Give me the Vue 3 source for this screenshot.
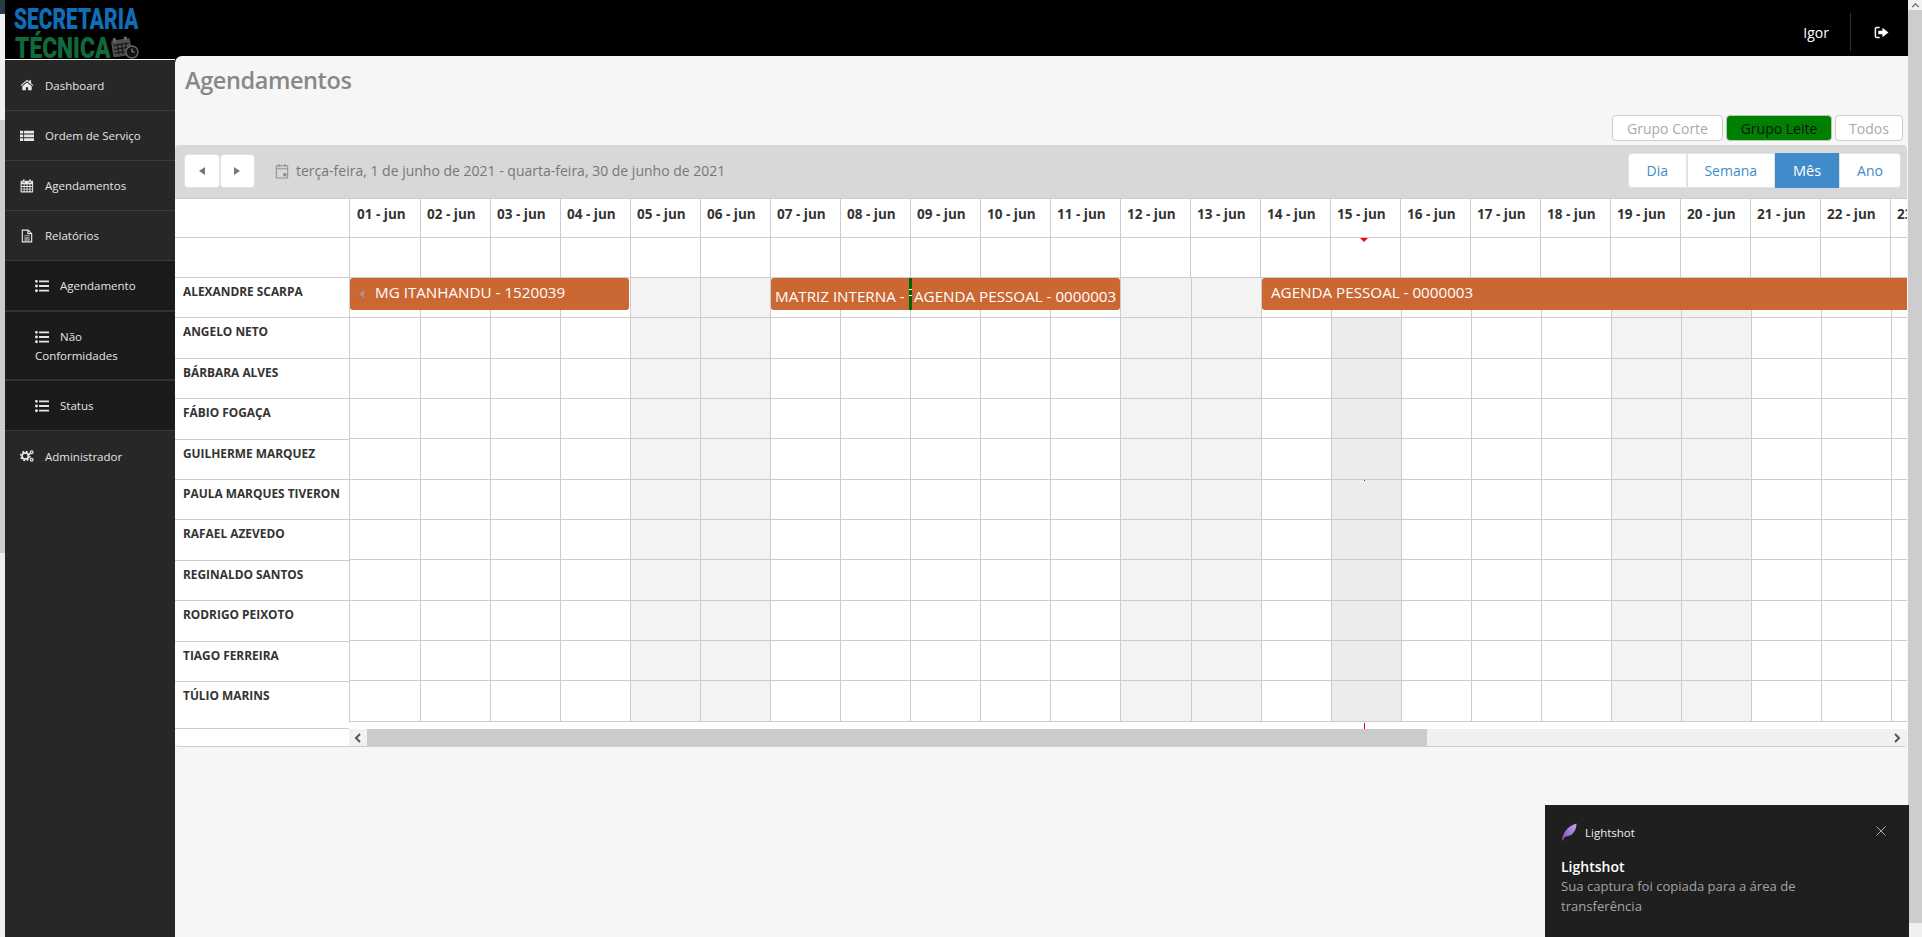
<script setup>
const days = Array.from({ length: 23 }, (_, i) => i + 1)
const label = d => String(d).padStart(2, '0') + ' - jun'
const isWeekend = d => d % 7 === 5 || d % 7 === 6
const people = ['ALEXANDRE SCARPA', 'ANGELO NETO', 'BÁRBARA ALVES', 'FÁBIO FOGAÇA', 'GUILHERME MARQUEZ', 'PAULA MARQUES TIVERON', 'RAFAEL AZEVEDO', 'REGINALDO SANTOS', 'RODRIGO PEIXOTO', 'TIAGO FERREIRA', 'TÚLIO MARINS']
</script>

<template>
  <div class="screen">
    <div class="strip">
      <div class="strip-a"></div>
      <div class="strip-b"></div>
      <div class="strip-c"></div>
      <div class="strip-d"></div>
    </div>

    <div class="app">
      <header class="topbar">
        <div class="logo">
          <div class="logo-line logo-blue"><span>SECRETARIA</span></div>
          <div class="logo-line logo-green"><span>TÉCNICA</span></div>
          <svg class="logo-icon" viewBox="0 0 28 24">
            <g transform="rotate(-8 12 12)">
              <rect x="1" y="4" width="19" height="17" rx="1.5" fill="#4d4d4d" />
              <rect x="3" y="2" width="3" height="4" fill="#666" />
              <rect x="14" y="2" width="3" height="4" fill="#666" />
              <path d="M3 9h15M3 13h15M3 17h15M7 8v11M11 8v11M15 8v11" stroke="#111" stroke-width="1" fill="none" />
            </g>
            <circle cx="21" cy="17" r="6" fill="#111" stroke="#666" stroke-width="1.4" />
            <path d="M21 13.5V17h3" stroke="#888" stroke-width="1.2" fill="none" />
          </svg>
        </div>
        <div class="user">Igor</div>
        <div class="logout">
          <svg viewBox="0 0 16 14" class="logout-icon">
            <path d="M6 1.5H3A1.6 1.6 0 0 0 1.4 3v8A1.6 1.6 0 0 0 3 12.5h3" fill="none" stroke="#fff" stroke-width="1.6" />
            <path d="M4.5 5H9V1.8L15.5 7 9 12.2V9H4.5z" fill="#fff" />
          </svg>
        </div>
      </header>

      <div class="body">
        <nav class="sidebar">
          <a class="nav-item nav-first">
            <svg class="ico" viewBox="0 0 24 24"><path d="M12 3 1 12.4l1.2 1.4L12 5.6l9.8 8.2 1.2-1.4-4-3.4V4h-3v2.4z" /><path d="M12 7.6 4 14.2V21h6v-5h4v5h6v-6.8z" /></svg>
            Dashboard
          </a>
          <a class="nav-item">
            <svg class="ico" viewBox="0 0 24 24"><path d="M0 3h5.5v4.6H0zM7 3h17v4.6H7zM0 9.4h5.5V14H0zM7 9.4h17V14H7zM0 15.8h5.5v4.6H0zM7 15.8h17v4.6H7z" /></svg>
            Ordem de Serviço
          </a>
          <a class="nav-item">
            <svg class="ico" viewBox="0 0 24 24"><path d="M5 1h3v4H5zM15.500 1h3v4h-3z" /><path fill-rule="evenodd" d="M2 3h2.500v3h4V3h6.500v3h4V3H21.500A1 1 0 0 1 22.500 4v18a1 1 0 0 1-1 1H2a1 1 0 0 1-1-1V4a1 1 0 0 1 1-1zM2.800 9v3h3.600V9zm5 0v3h3.400V9zm5 0v3h3.400V9zm5 0v3h3V9zM2.800 13.500v3h3.600v-3zm5 0v3h3.400v-3zm5 0v3h3.400v-3zm5 0v3h3v-3zM2.800 18v3h3.600v-3zm5 0v3h3.400v-3zm5 0v3h3.400v-3zm5 0v3h3v-3z" /></svg>
            Agendamentos
          </a>
          <a class="nav-item">
            <svg class="ico" viewBox="0 0 24 24"><path fill-rule="evenodd" d="M3 1h11.500L21 7.500V23H3zM5 3v18h14V9h-6.500V3zm9.500.800V7h3.200zM7.500 11h9v1.600h-9zm0 3.500h9v1.600h-9zm0 3.500h9v1.600h-9z" /></svg>
            Relatórios
          </a>
          <div class="submenu">
            <a class="sub-item">
              <svg class="ico" viewBox="0 0 24 24"><path d="M0 4a2.500 2.500 0 1 1 5 0 2.500 2.500 0 0 1-5 0zM0 12a2.500 2.500 0 1 1 5 0 2.500 2.500 0 0 1-5 0zM0 20a2.500 2.500 0 1 1 5 0 2.500 2.500 0 0 1-5 0zM7 2.500h17v3.200H7zM7 10.400h17v3.200H7zM7 18.300h17v3.200H7z" /></svg>
              Agendamento
            </a>
            <a class="sub-item sub-wrap">
              <span class="sub-first">
                <svg class="ico" viewBox="0 0 24 24"><path d="M0 4a2.500 2.500 0 1 1 5 0 2.500 2.500 0 0 1-5 0zM0 12a2.500 2.500 0 1 1 5 0 2.500 2.500 0 0 1-5 0zM0 20a2.500 2.500 0 1 1 5 0 2.500 2.500 0 0 1-5 0zM7 2.500h17v3.200H7zM7 10.400h17v3.200H7zM7 18.300h17v3.200H7z" /></svg>
                Não
              </span>
              <span>Conformidades</span>
            </a>
            <a class="sub-item">
              <svg class="ico" viewBox="0 0 24 24"><path d="M0 4a2.500 2.500 0 1 1 5 0 2.500 2.500 0 0 1-5 0zM0 12a2.500 2.500 0 1 1 5 0 2.500 2.500 0 0 1-5 0zM0 20a2.500 2.500 0 1 1 5 0 2.500 2.500 0 0 1-5 0zM7 2.500h17v3.200H7zM7 10.400h17v3.200H7zM7 18.300h17v3.200H7z" /></svg>
              Status
            </a>
          </div>
          <a class="nav-item nav-plain">
            <svg class="ico" viewBox="0 0 24 24">
              <circle cx="9" cy="12" r="5.500" fill="none" stroke="#e8e8e8" stroke-width="3" />
              <circle cx="9" cy="12" r="8" fill="none" stroke="#e8e8e8" stroke-width="2.400" stroke-dasharray="3.200 3.080" />
              <circle cx="20" cy="5.500" r="2.400" fill="none" stroke="#e8e8e8" stroke-width="2" />
              <circle cx="20" cy="18.500" r="2.400" fill="none" stroke="#e8e8e8" stroke-width="2" />
            </svg>
            Administrador
          </a>
        </nav>

        <main class="content">
          <h1 class="title">Agendamentos</h1>
          <div class="groups">
            <button class="group">Grupo Corte</button>
            <button class="group group-active">Grupo Leite</button>
            <button class="group group-all">Todos</button>
          </div>

          <section class="calendar">
            <div class="toolbar">
              <div class="toolbar-left">
                <div class="btn-pair">
                  <button class="arrow-btn"><span class="tri tri-left"></span></button>
                  <button class="arrow-btn"><span class="tri tri-right"></span></button>
                </div>
                <svg class="date-ico" viewBox="0 0 16 18">
                  <path d="M1.500 3h13v14h-13zM1.500 6.500h13M4.500 1v3.500M11.500 1v3.500" fill="none" stroke="#8a8a8a" stroke-width="1.100" />
                  <rect x="9.500" y="11.500" width="3.500" height="3.500" fill="#8a8a8a" />
                </svg>
                <span class="date-text">terça-feira, 1 de junho de 2021 - quarta-feira, 30 de junho de 2021</span>
              </div>
              <div class="views">
                <button class="view view-dia">Dia</button>
                <button class="view view-semana">Semana</button>
                <button class="view view-mes">Mês</button>
                <button class="view view-ano">Ano</button>
              </div>
            </div>

            <div class="cal-body">
              <div class="names">
                <div class="names-head"></div>
                <div class="names-blank"></div>
                <div v-for="p in people" :key="p" class="name">{{ p }}</div>
              </div>

              <div class="timeline">
                <div class="head-row">
                  <div v-for="d in days" :key="d" class="head-cell">{{ label(d) }}</div>
                </div>
                <div class="blank-row">
                  <div v-for="d in days" :key="d" class="blank-cell"></div>
                </div>
                <div v-for="(p, r) in people" :key="p" class="grid-row">
                  <div
                    v-for="d in days"
                    :key="d"
                    class="grid-cell"
                    :class="{ weekend: isWeekend(d), today: d === 15 && r > 0 }"
                  ></div>
                  <template v-if="r === 0">
                    <div class="event event-a"><span class="tri-ev"></span>MG ITANHANDU - 1520039</div>
                    <div class="event event-b">MATRIZ INTERNA - 1520040</div>
                    <div class="event-sep"></div>
                    <div class="event event-c">AGENDA PESSOAL - 0000003</div>
                    <div class="event event-d">AGENDA PESSOAL - 0000003</div>
                  </template>
                </div>
                <div class="hscroll">
                  <div class="hs-btn"><svg viewBox="0 0 10 10" class="chev"><path d="M7 1 3 5l4 4" /></svg></div>
                  <div class="hs-thumb"></div>
                  <div class="hs-track"></div>
                  <div class="hs-btn hs-end"><svg viewBox="0 0 10 10" class="chev"><path d="m3 1 4 4-4 4" /></svg></div>
                </div>
                <span class="mark-top"></span>
                <span class="mark-tick"></span>
                <span class="mark-foot"></span>
              </div>
            </div>
          </section>
        </main>
      </div>
    </div>

    <div class="vscroll">
      <div class="vs-cap"><svg viewBox="0 0 10 6" class="vs-chev"><path d="m1 5 4-4 4 4" /></svg></div>
      <div class="vs-bar"></div>
      <div class="vs-end"></div>
    </div>

    <aside class="toast">
      <div class="toast-head">
        <svg class="feather" viewBox="0 0 16 18">
          <defs>
            <linearGradient id="fth" x1="0" y1="1" x2="1" y2="0">
              <stop offset="0" stop-color="#7d4fc0" />
              <stop offset="1" stop-color="#c9a3ee" />
            </linearGradient>
          </defs>
          <path d="M1 17.500C1.500 11 6 3 15.500 .5 15.500 7 12 13 5 13.500 3.500 14 2.500 15.500 2 17.500z" fill="url(#fth)" />
        </svg>
        <span class="toast-app">Lightshot</span>
        <svg class="toast-x" viewBox="0 0 10 10"><path d="m.5 .5 9 9m0-9-9 9" /></svg>
      </div>
      <div class="toast-title">Lightshot</div>
      <div class="toast-msg">Sua captura foi copiada para a área de transferência</div>
    </aside>
  </div>
</template>

<style>
html, body { margin: 0; padding: 0; background: #f6f6f6; overflow: hidden; }
</style>

<style scoped>
* { box-sizing: border-box; }
.screen {
  position: relative;
  display: flex;
  width: 1922px;
  height: 937px;
  overflow: hidden;
  font-family: "Open Sans", "Liberation Sans", sans-serif;
  color: #333;
}
.strip { width: 5px; display: flex; flex-direction: column; flex: none; }
.strip-a { height: 14px; background: #2c3a4a; }
.strip-b { height: 106px; background: #f0f0f0; }
.strip-c { height: 433px; background: #cdcdcd; }
.strip-d { flex: 1; background: #eeeeee; }

.app { width: 1903px; flex: none; display: flex; flex-direction: column; background: #000; }

.topbar { height: 56px; flex: none; background: #000; display: flex; align-items: flex-start; position: relative; }
.logo { position: relative; width: 140px; height: 59px; font-family: Roboto, "Liberation Sans", sans-serif; font-weight: 900; z-index: 2; }
.logo-line { position: absolute; white-space: nowrap; line-height: 1; }
.logo-line span { display: inline-block; transform-origin: left center; }
.logo-blue { left: 9px; top: 5px; font-size: 29.500px; color: #0e6fb8; }
.logo-blue span { transform: scaleX(.707); }
.logo-green { left: 10px; top: 33px; font-size: 30px; color: #0f6a3c; }
.logo-green span { transform: scaleX(.76); }
.logo-icon { position: absolute; left: 105px; top: 35px; width: 30px; height: 24px; }
.user { margin-left: auto; color: #fff; font-size: 14px; margin-right: 21px; margin-top: 23px; }
.logout { width: 58px; height: 38px; margin-top: 13px; border-left: 1px solid #2b3440; display: flex; align-items: center; padding-left: 23px; }
.logout-icon { width: 15px; height: 13px; }

.body { flex: 1; display: flex; min-height: 0; }
.sidebar { width: 170px; flex: none; margin-top: 3px; border-top: 1px solid #fff; background: #272727; color: #e4e4e4; font-size: 11.500px; display: flex; flex-direction: column; }
.nav-item { height: 50px; flex: none; display: flex; align-items: center; padding-left: 15px; border-bottom: 1px solid #3a3a3a; }
.nav-first { height: 51px; }
.nav-plain { border-bottom: 0; }
.ico { width: 14px; height: 14px; fill: #e8e8e8; margin-right: 11px; flex: none; }
.submenu { background: #1b1b1b; }
.sub-item { height: 51px; display: flex; align-items: center; padding-left: 30px; border-bottom: 2px solid #333; }
.sub-item .ico { margin-right: 11px; }
.sub-item:last-child { border-bottom: 1px solid #3a3a3a; height: 50px; }
.sub-wrap { height: 69px; flex-direction: column; align-items: flex-start; justify-content: center; gap: 3px; }
.sub-first { display: flex; align-items: center; height: 16px; }
.sub-first .ico { margin-right: 11px; }

.content { flex: 1; min-width: 0; background: #f6f6f6; border-top-left-radius: 7px; display: flex; flex-direction: column; }
.title { margin: 0; height: 59px; padding: 6px 0 0 10px; font-size: 23.500px; line-height: 36px; font-weight: 600; letter-spacing: -.4px; color: #888; }
.groups { display: flex; justify-content: flex-end; gap: 3px; padding-right: 5px; height: 26px; }
.group { height: 26px; padding: 0; width: 111px; background: #fff; border: 1px solid #ccc; border-radius: 4px; color: #aaa; font: 14px "Open Sans", sans-serif; }
.group-active { width: 106px; background: #008000; color: #111; border-color: #b5c8b5; }
.group-all { width: 68px; }

.calendar { margin-top: 4px; width: 1732px; height: 602px; background: #fff; border-bottom: 1px solid #ccc; border-radius: 4px; overflow: hidden; display: flex; flex-direction: column; }
.toolbar { height: 54px; flex: none; background: #d8d8d8; border-bottom: 1px solid #ccc; display: flex; align-items: center; justify-content: space-between; padding: 0 6px 2px 9px; }
.toolbar-left { display: flex; align-items: center; }
.btn-pair { display: flex; }
.arrow-btn { width: 35.500px; height: 34px; padding: 0; background: #fff; border: 1px solid #e3e3e3; border-radius: 4px; display: flex; align-items: center; justify-content: center; }
.tri { width: 0; height: 0; border-top: 4.500px solid transparent; border-bottom: 4.500px solid transparent; }
.tri-left { border-right: 6px solid #777; }
.tri-right { border-left: 6px solid #777; }
.date-ico { width: 14px; height: 16px; margin-left: 20px; }
.date-text { margin-left: 7px; font-size: 14px; color: #777; }
.views { display: flex; }
.view { height: 35px; padding: 0; background: #fff; border: 1px solid #e3e3e3; border-radius: 4px; color: #428bca; font: 14px "Open Sans", sans-serif; }
.view-dia { width: 58.500px; border-radius: 4px 0 0 4px; }
.view-semana { width: 88.500px; border-radius: 0; }
.view-mes { width: 64px; background: #428bca; border-color: #428bca; color: #fff; border-radius: 0; font-size: 14.500px; }
.view-ano { width: 62px; border-radius: 0 4px 4px 0; }

.cal-body { display: flex; flex: 1; min-height: 0; }
.names { width: 174px; flex: none; }
.names-head { height: 39px; border-bottom: 1px solid #ccc; }
.names-blank { height: 40px; border-bottom: 1px solid #ccc; }
.name { height: 40.420px; padding: 4px 0 0 8px; font-size: 11.900px; line-height: 18px; font-weight: 700; color: #333; border-bottom: 1px solid #ccc; white-space: nowrap; }
.name:first-of-type { padding-top: 3px; }
.name:last-child { height: 47px; }

.timeline { position: relative; flex: 1; min-width: 0; overflow: hidden; display: flex; flex-direction: column; }
.head-row, .blank-row, .grid-row { display: flex; flex: none; }
.head-row { height: 39px; }
.blank-row { height: 40px; }
.grid-row { height: 40.330px; position: relative; }
.head-cell, .blank-cell, .grid-cell { flex: none; width: 70px; border-left: 1px solid #ccc; border-bottom: 1px solid #ccc; }
.head-cell:first-child, .blank-cell:first-child, .grid-cell:first-child { width: 71px; }
.grid-cell { width: 70.060px; }
.head-cell { padding: 0 0 0 6px; font-size: 13.500px; line-height: 31px; font-weight: 700; color: #333; white-space: nowrap; }
.head-cell:first-child { padding-left: 7px; }
.weekend { background: #f3f3f3; }
.today { background: #ececec; }

.event { position: absolute; top: 0; height: 32px; background: #cb6732; color: #fff; font-size: 15.200px; white-space: nowrap; overflow: hidden; }
.event-a { left: 1px; width: 279px; border-radius: 3px; padding-left: 25px; line-height: 28px; }
.event-b { left: 422px; width: 138px; border-radius: 3px 0 0 3px; padding-left: 4px; line-height: 36px; }
.event-c { left: 562px; width: 209px; border-radius: 0 3px 3px 0; padding-left: 3px; line-height: 36px; }
.event-d { left: 913px; width: 646px; border-radius: 3px 0 0 3px; padding-left: 9px; line-height: 28px; }
.event-sep { position: absolute; top: 0; left: 560px; width: 3px; height: 32px; background: linear-gradient(#006400 0 11px, #fff 11px 12px, #006400 12px 17px, #fff 17px 18px, #006400 18px); z-index: 1; }
.tri-ev { position: absolute; left: 9px; top: 12px; width: 0; height: 0; border-top: 4px solid transparent; border-bottom: 4px solid transparent; border-right: 5px solid #a89488; }

.hscroll { margin-top: 7.400px; height: 17px; display: flex; flex: none; background: #efefef; }
.hs-btn { width: 18px; flex: none; display: flex; align-items: center; justify-content: center; background: #f1f1f1; }
.hs-thumb { width: 1060px; flex: none; background: #cbcbcb; }
.hs-track { flex: 1; }
.hs-end { width: 20px; }
.chev { width: 10px; height: 10px; fill: none; stroke: #555; stroke-width: 2; }

.mark-top { position: absolute; left: 1011px; top: 39px; width: 0; height: 0; border-left: 4px solid transparent; border-right: 4px solid transparent; border-top: 4px solid #f00; }
.mark-tick { position: absolute; left: 1015px; top: 281px; width: 1px; height: 1px; background: #f00; }
.mark-foot { position: absolute; left: 1015px; top: 524px; width: 1px; height: 6px; background: #f00; }

.vscroll { flex: 1; display: flex; flex-direction: column; }
.vs-cap { height: 10px; background: #f1f1f1; display: flex; justify-content: center; align-items: center; }
.vs-chev { width: 9px; height: 5px; fill: none; stroke: #666; stroke-width: 1.500; }
.vs-bar { height: 913px; background: #cdcdcd; }
.vs-end { flex: 1; background: #f0f0f0; }

.toast { position: absolute; left: 1545px; top: 805px; width: 364px; height: 132px; background: #1f1f1f; padding: 0 16px; color: #fff; }
.toast-head { display: flex; align-items: center; height: 54px; position: relative; padding-bottom: 0; }
.feather { width: 16px; height: 18px; margin-right: 8px; flex: none; }
.toast-app { font-size: 11.500px; color: #eee; }
.toast-x { position: absolute; right: 7px; top: 21px; width: 10px; height: 10px; fill: none; stroke: #aaa; stroke-width: 1; }
.toast-title { font-size: 14px; font-weight: 600; line-height: 19px; margin-top: -2px; }
.toast-msg { font-size: 13.100px; line-height: 20px; color: #a4a4a4; width: 300px; }
</style>
